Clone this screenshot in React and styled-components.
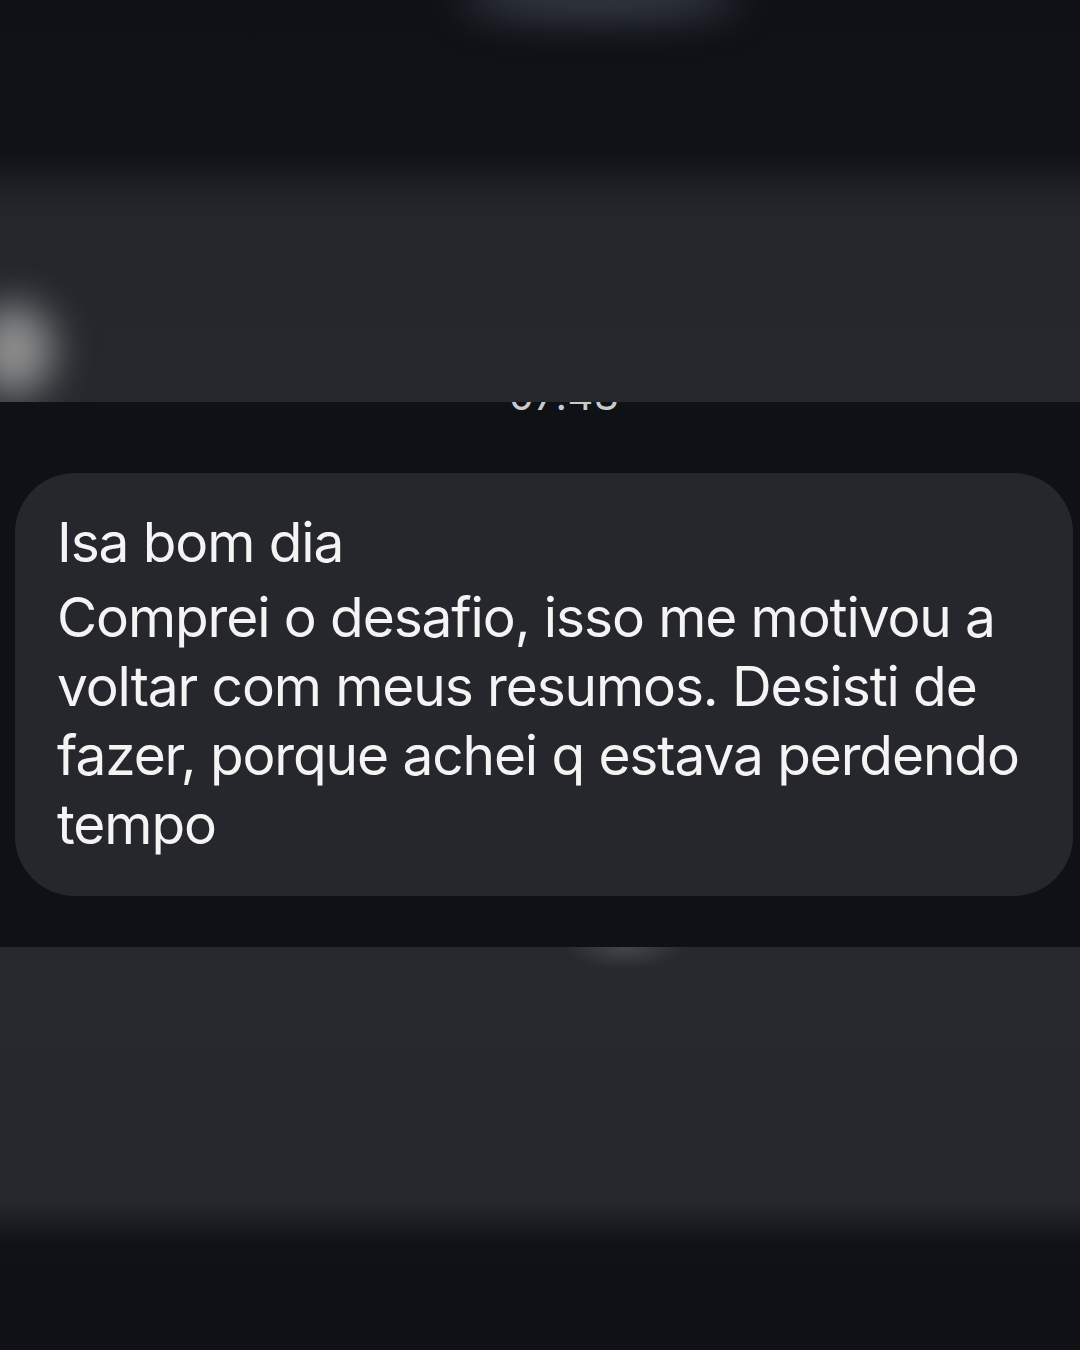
import React from 'react';
import styled, { createGlobalStyle } from 'styled-components';

const GlobalStyle = createGlobalStyle`
  html, body {
    margin: 0;
    padding: 0;
    background: #0e1116;
  }
  body {
    font-family: Inter, "Noto Sans", sans-serif;
  }
`;

function App() {
  return (
    <Page>
      <GlobalStyle />
      <BlurredTop>
        <Glow $x={600} $y={-2} $w={280} $h={40} $color="rgba(120,125,140,0.45)" />
        <Glow $x={14} $y={350} $w={80} $h={92} $color="rgba(150,150,150,0.95)" />
      </BlurredTop>

      <Strip>
        <TimeLabel>07:48</TimeLabel>
        <Bubble>
          <Greeting>Isa bom dia</Greeting>
          <Message>
            Comprei o desafio, isso me motivou a voltar com meus resumos. Desisti de
            fazer, porque achei q estava perdendo tempo
          </Message>
        </Bubble>
      </Strip>

      <BlurredBottom />
    </Page>
  );
}

const Page = styled.div`
  width: 1080px;
  height: 1350px;
  display: flex;
  flex-direction: column;
  overflow: hidden;
  background: #0e1116;
`;

const BlurredTop = styled.div`
  position: relative;
  height: 402px;
  flex-shrink: 0;
  overflow: hidden;
  background: linear-gradient(
    to bottom,
    #0e1116 0px,
    #0f1217 155px,
    #1b1e23 182px,
    #23262b 212px,
    #25282d 402px
  );
`;

// blurred lower half of the screenshot, faint light spot at the top edge
const BlurredBottom = styled.div`
  flex: 1;
  background:
    radial-gradient(ellipse 60px 22px at 625px 0px, rgba(90, 92, 97, 0.55), rgba(38, 41, 45, 0) 100%),
    linear-gradient(
      to bottom,
      #26292d 0px,
      #25282c 255px,
      #1c1f24 272px,
      #0f1217 296px,
      #0e1116 320px
    );
`;

const Glow = styled.div`
  position: absolute;
  left: ${p => p.$x - p.$w / 2}px;
  top: ${p => p.$y - p.$h / 2}px;
  width: ${p => p.$w}px;
  height: ${p => p.$h}px;
  border-radius: 50%;
  background: ${p => p.$color};
  filter: blur(20px);
`;

const Strip = styled.div`
  height: 545px;
  flex-shrink: 0;
  overflow: hidden;
  background: #0e1116;
  display: flex;
  flex-direction: column;
  align-items: center;
  padding: 0 7px 0 15px;
  box-sizing: border-box;
`;

const TimeLabel = styled.div`
  margin-top: -28px;
  height: 44px;
  font-family: Inter, "Noto Sans", sans-serif;
  font-size: 40px;
  line-height: 44px;
  color: #c9cacc;
  letter-spacing: 0.5px;
  margin-bottom: 55px;
  margin-left: 40px;
`;

const Bubble = styled.div`
  align-self: stretch;
  background: #25272c;
  border-radius: 60px;
  padding: 35px 24px 37px 42px;
  color: #f4f4f5;
  font-family: Inter, "Noto Sans", sans-serif;
  font-size: 55px;
  line-height: 69px;
  letter-spacing: -1.1px;
`;

const Greeting = styled.div`
  margin-bottom: 6px;
`;

const Message = styled.div``;

export default App;
